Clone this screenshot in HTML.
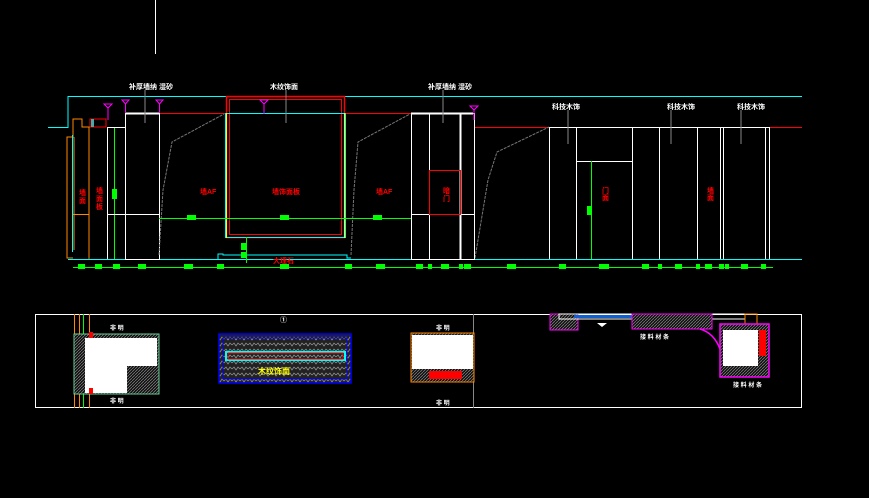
<!DOCTYPE html>
<html><head><meta charset="utf-8"><style>
html,body{margin:0;padding:0;background:#000;width:869px;height:498px;overflow:hidden}
svg{display:block}
text{font-family:"Liberation Sans","Noto Sans CJK SC",sans-serif;font-weight:bold}
</style></head><body>
<svg width="869" height="498" viewBox="0 0 869 498" xmlns="http://www.w3.org/2000/svg">
<defs>
<pattern id="h" width="3" height="3" patternUnits="userSpaceOnUse"><rect width="3" height="3" fill="#111"/><path d="M0 3L3 0" stroke="#888" stroke-width="0.7"/></pattern>
<pattern id="st" width="8" height="6" patternUnits="userSpaceOnUse"><rect width="8" height="6" fill="#222"/><path d="M0 3l2-2 2 3 2-3 2 2" stroke="#999" stroke-width="0.7" fill="none"/></pattern>
</defs>
<g fill="none" stroke-width="1">
<line x1="155.5" y1="0" x2="155.5" y2="54" stroke="#fff"/>
<!-- top/bottom cyan -->
<line x1="68" y1="96.5" x2="802" y2="96.5" stroke="#0ff"/>
<polyline points="48,127.5 68,127.5 68,96" stroke="#0ff"/>
<line x1="68" y1="259.5" x2="802" y2="259.5" stroke="#0ff"/>
<line x1="474" y1="127.5" x2="549" y2="127.5" stroke="#f00"/>
<line x1="769" y1="127.5" x2="802" y2="127.5" stroke="#f00"/>
<line x1="159" y1="113.5" x2="226" y2="113.5" stroke="#f00"/>
<line x1="345" y1="113.5" x2="411" y2="113.5" stroke="#f00"/>
<!-- left strips -->
<polyline points="73,258 67,258 67,137 73,137 73,119 82,119 82,127 89,127 89,259" stroke="#f80"/>
<line x1="74" y1="137" x2="74" y2="250" stroke="#f80"/>
<line x1="72.5" y1="135" x2="72.5" y2="252" stroke="#0ff"/>
<rect x="90" y="119" width="16" height="8" stroke="#f00"/>
<rect x="91" y="119" width="3" height="8" fill="#4aa" stroke="none"/>
<line x1="107.5" y1="127" x2="107.5" y2="259" stroke="#fff"/>
<line x1="114.5" y1="127" x2="114.5" y2="259" stroke="#0f0"/>
<line x1="107" y1="127.5" x2="125" y2="127.5" stroke="#fff"/>
<line x1="73" y1="214.5" x2="89" y2="214.5" stroke="#f80"/>
<line x1="107" y1="214.5" x2="125" y2="214.5" stroke="#fff"/>
<!-- white box 1 -->
<rect x="125.5" y="113.5" width="34" height="146" stroke="#fff"/>
<line x1="125" y1="113.5" x2="159" y2="113.5" stroke="#fff" stroke-width="2"/>
<line x1="125" y1="214.5" x2="159" y2="214.5" stroke="#fff"/>
<!-- diagonals gray -->
<polyline points="159,255 163,190 172,142 224,114" stroke="#777" stroke-dasharray="3,1"/>
<polyline points="351,255 354,190 358,142 410,114" stroke="#777" stroke-dasharray="3,1"/>
<polyline points="475,258 488,180 497,152 549,127" stroke="#777" stroke-dasharray="3,1"/>
<!-- central box -->
<rect x="226.5" y="96.5" width="118" height="141" stroke="#f00" stroke-width="1.5"/>
<rect x="229.5" y="99.5" width="112" height="135" stroke="#f00"/>
<rect x="225.5" y="113.5" width="120" height="124" stroke="#0ff"/>
<line x1="344.5" y1="113" x2="344.5" y2="238" stroke="#ff0"/>
<line x1="226.5" y1="113" x2="226.5" y2="238" stroke="#ff0"/>
<polyline points="218,259 218,254 223,254 223,255 347,255 347,258 351,258" stroke="#0ff"/>
<line x1="159" y1="218.5" x2="411" y2="218.5" stroke="#0f0"/>
<line x1="246.5" y1="237" x2="246.5" y2="263" stroke="#0f0"/>
<!-- right white box 2 -->
<rect x="411.5" y="113.5" width="63" height="146" stroke="#fff"/>
<line x1="411" y1="113.5" x2="473" y2="113.5" stroke="#fff" stroke-width="2"/>
<line x1="429.5" y1="113" x2="429.5" y2="259" stroke="#fff"/>
<line x1="460.5" y1="113" x2="460.5" y2="259" stroke="#fff" stroke-width="2"/>
<line x1="411" y1="214.5" x2="474" y2="214.5" stroke="#fff"/>
<rect x="429.5" y="170.5" width="31" height="44" stroke="#f00"/>
<!-- right panels -->
<line x1="549" y1="127.5" x2="769" y2="127.5" stroke="#fff"/>
<g stroke="#fff">
<line x1="549.5" y1="127" x2="549.5" y2="259"/><line x1="576.5" y1="127" x2="576.5" y2="259"/>
<line x1="632.5" y1="127" x2="632.5" y2="259"/><line x1="659.5" y1="127" x2="659.5" y2="259"/>
<line x1="697.5" y1="127" x2="697.5" y2="259"/><line x1="720.5" y1="127" x2="720.5" y2="259"/>
<line x1="723.5" y1="127" x2="723.5" y2="259"/><line x1="765.5" y1="127" x2="765.5" y2="259"/>
<line x1="769.5" y1="127" x2="769.5" y2="259"/>
<line x1="576" y1="161.5" x2="632" y2="161.5"/>
</g>
<line x1="591.5" y1="161" x2="591.5" y2="259" stroke="#0f0"/>
<!-- leaders -->
<g stroke="#888">
<polyline points="145,90 145,123"/><polyline points="286,90 286,123"/><polyline points="443,90 443,123"/>
<polyline points="568,110 568,144"/><polyline points="671,110 671,144"/><polyline points="741,110 741,144"/>
</g>
<!-- magenta markers -->
<g stroke="#f0f">
<path d="M104 104h8l-4 4zM108 108v12"/><path d="M122 100h7l-3.5 4zM125.5 104v9"/>
<path d="M156 100h7l-3.5 4zM159.5 104v9"/><path d="M260 100h8l-4 4zM264 104v10"/>
<path d="M470 106h8l-4 4zM474 110v10"/>
</g>
<!-- dim line -->
<line x1="73" y1="267.5" x2="773" y2="267.5" stroke="#0f0"/>
</g>
<g fill="#0f0">
<rect x="78" y="264" width="7" height="5"/><rect x="95" y="264" width="7" height="5"/><rect x="113" y="264" width="7" height="5"/>
<rect x="138" y="264" width="8" height="5"/><rect x="184" y="264" width="9" height="5"/><rect x="217" y="264" width="7" height="5"/>
<rect x="280" y="264" width="9" height="5"/><rect x="345" y="264" width="7" height="5"/><rect x="376" y="264" width="9" height="5"/>
<rect x="416" y="264" width="7" height="5"/><rect x="428" y="264" width="4" height="5"/><rect x="441" y="264" width="8" height="5"/>
<rect x="459" y="264" width="4" height="5"/><rect x="464" y="264" width="7" height="5"/><rect x="507" y="264" width="9" height="5"/>
<rect x="559" y="264" width="7" height="5"/><rect x="599" y="264" width="10" height="5"/><rect x="642" y="264" width="7" height="5"/>
<rect x="658" y="264" width="4" height="5"/><rect x="675" y="264" width="7" height="5"/><rect x="696" y="264" width="4" height="5"/>
<rect x="705" y="264" width="7" height="5"/><rect x="719" y="264" width="5" height="5"/><rect x="725" y="264" width="4" height="5"/>
<rect x="741" y="264" width="7" height="5"/><rect x="761" y="264" width="5" height="5"/>
<rect x="112" y="189" width="5" height="10"/><rect x="187" y="215" width="9" height="5"/><rect x="280" y="215" width="9" height="5"/>
<rect x="373" y="215" width="9" height="5"/><rect x="241" y="243" width="5" height="7"/><rect x="241" y="252" width="5" height="6"/>
<rect x="587" y="206" width="4" height="9"/>
</g>
<!-- labels -->
<g fill="#fff" font-size="7">
<text x="129" y="89">补厚墙纳 湿砂</text><text x="270" y="89">木纹饰面</text><text x="428" y="89">补厚墙纳 湿砂</text>
<text x="552" y="109">科技木饰</text><text x="667" y="109">科技木饰</text><text x="737" y="109">科技木饰</text>
</g>
<g fill="#f00" font-size="7">
<text x="200" y="194">墙AF</text><text x="272" y="194">墙饰面板</text><text x="376" y="194">墙AF</text>
<text x="273" y="263">大理石</text>
<text x="79" y="195">墙</text><text x="79" y="203">面</text>
<text x="96" y="193">墙</text><text x="96" y="201">面</text><text x="96" y="209">板</text>
<text x="443" y="193">暗</text><text x="443" y="201">门</text>
<text x="602" y="193">门</text><text x="602" y="200">面</text>
<text x="707" y="193">墙</text><text x="707" y="200">面</text>
</g>
<!-- bottom panel -->
<rect x="35.5" y="314.5" width="766" height="93" fill="none" stroke="#fff"/>
<line x1="473.5" y1="314" x2="473.5" y2="408" stroke="#888"/>
<g stroke-width="1" fill="none">
<line x1="74.5" y1="314" x2="74.5" y2="408" stroke="#f80"/>
<line x1="79.5" y1="314" x2="79.5" y2="408" stroke="#f80"/>
<line x1="83.5" y1="314" x2="83.5" y2="408" stroke="#0f0"/>
<line x1="89.5" y1="314" x2="89.5" y2="408" stroke="#f80"/>
</g>
<rect x="74" y="334" width="85" height="60" fill="url(#h)" stroke="#f80"/>
<rect x="74" y="334" width="85" height="60" fill="none" stroke="#0ff" stroke-width="0.6"/>
<path d="M85 338h72v28h-30v27h-42z" fill="#fff"/>
<rect x="89" y="332" width="4" height="6" fill="#f00"/><rect x="89" y="388" width="4" height="6" fill="#f00"/>
<g fill="#fff" font-size="6"><text x="110" y="330">非 明</text><text x="110" y="403">非 明</text></g>
<rect x="219" y="334" width="132" height="49" fill="url(#st)" stroke="#00f" stroke-width="1.5"/>
<rect x="223" y="338" width="124" height="41" fill="none" stroke="#00f"/>
<rect x="226" y="352" width="119" height="8" fill="none" stroke="#0ff" stroke-width="2"/>
<rect x="228" y="353" width="115" height="6" fill="none" stroke="#f00"/>
<text x="258" y="374" fill="#ff0" font-size="8">木纹饰面</text>
<text x="280" y="322" fill="#fff" font-size="7">①</text>
<rect x="411" y="333" width="63" height="49" fill="url(#h)" stroke="#f80"/>
<rect x="412" y="335" width="61" height="34" fill="#fff"/>
<path d="M429 371h33v8h-33z" fill="#f00"/>
<g fill="#fff" font-size="6"><text x="436" y="330">非 明</text><text x="436" y="405">非 明</text></g>
<rect x="550" y="314" width="28" height="16" fill="url(#h)" stroke="#f0f"/>
<rect x="559" y="314" width="186" height="5" fill="none" stroke="#fff"/>
<rect x="574" y="315" width="60" height="3" fill="#1060d0"/>
<rect x="632" y="314" width="80" height="15" fill="url(#h)" stroke="#f0f"/>
<rect x="745" y="314" width="12" height="10" fill="none" stroke="#f80"/>
<rect x="720" y="324" width="49" height="53" fill="url(#h)" stroke="#f0f" stroke-width="1.5"/>
<rect x="723" y="330" width="35" height="36" fill="#fff"/>
<rect x="759" y="330" width="7" height="26" fill="#f00"/>
<path d="M700 329q14 4 20 20" fill="none" stroke="#f0f" stroke-width="1.5"/>
<path d="M597 323h10l-5 4z" fill="#fff"/>
<g fill="#fff" font-size="6"><text x="640" y="339">接 料 材 条</text><text x="733" y="387">接 料 材 条</text></g>
</svg>
</body></html>
